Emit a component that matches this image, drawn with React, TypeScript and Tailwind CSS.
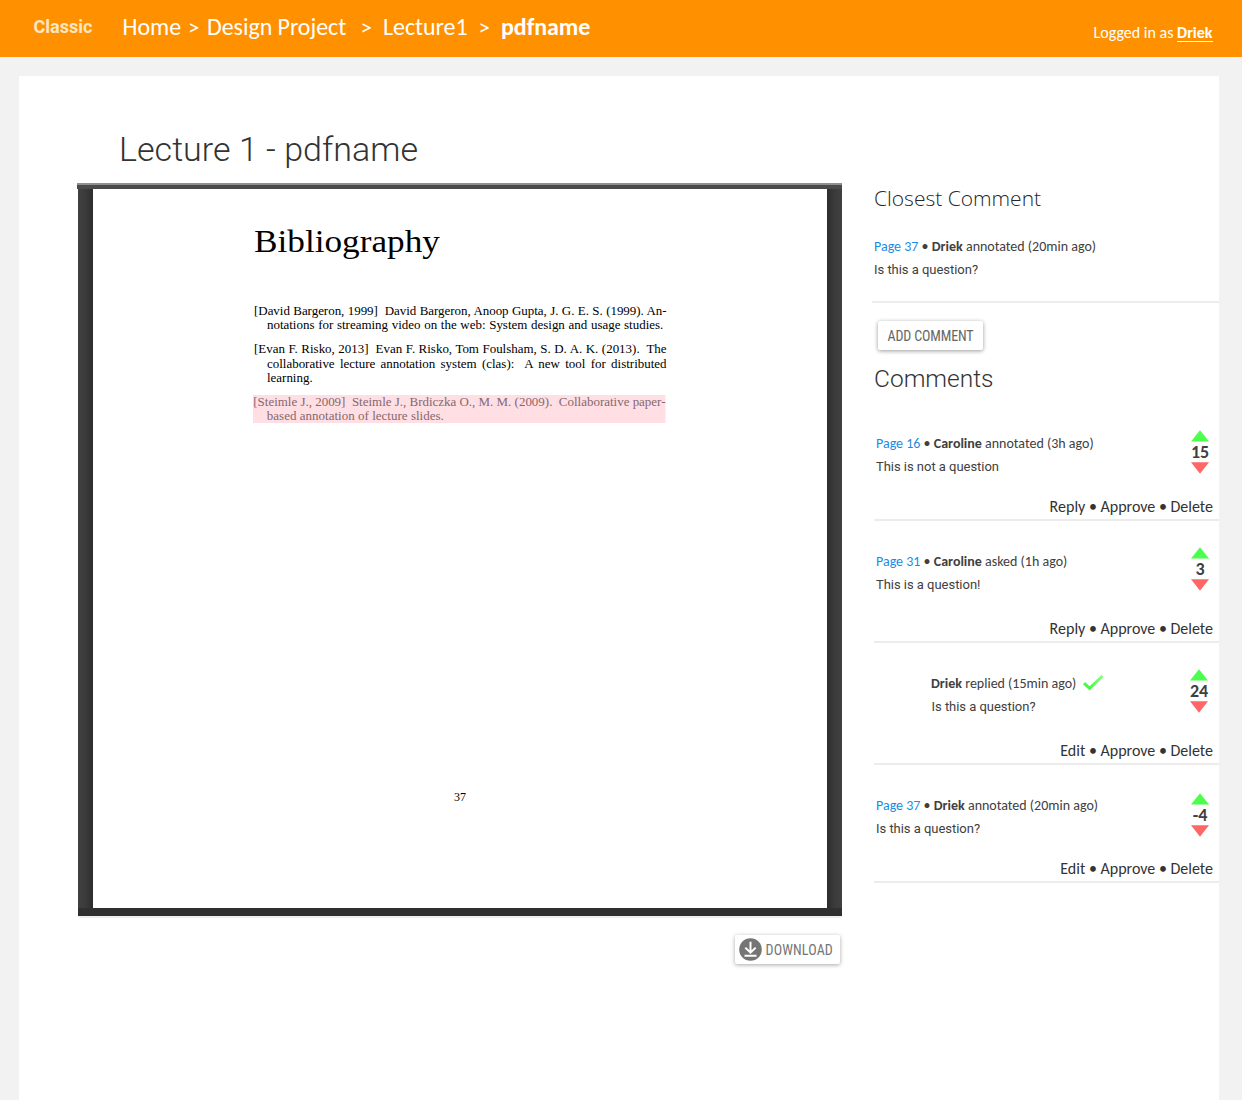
import React from "react";

type Entry = {
  page?: string;
  author: string;
  action: string;
  text: string;
  score: string;
  first: string;
  approved?: boolean;
  className: string;
  votes: string;
};

const entries: Entry[] = [
  { page: "Page 16", author: "Caroline", action: "annotated (3h ago)", text: "This is not a question", score: "15", first: "Reply", className: "h-[118px]", votes: "mt-[27px] mr-[10px]" },
  { page: "Page 31", author: "Caroline", action: "asked (1h ago)", text: "This is a question!", score: "3", first: "Reply", className: "h-[122px]", votes: "mt-[26px] mr-[10px]" },
  { author: "Driek", action: "replied (15min ago)", text: "Is this a question?", score: "24", first: "Edit", approved: true, className: "h-[122px]", votes: "mt-[26px] mr-[11px]" },
  { page: "Page 37", author: "Driek", action: "annotated (20min ago)", text: "Is this a question?", score: "-4", first: "Edit", className: "h-[118px]", votes: "mt-[28px] mr-[10px]" },
];

function Meta({ page, author, action, approved }: { page?: string; author: string; action: string; approved?: boolean }) {
  return (
    <div className="flex h-6 items-center whitespace-nowrap text-[14px] text-[#404040]">
      <span className="whitespace-pre">
        {page && (
          <>
            <a className="text-[#1a8ce3]">{page}</a>
            {" • "}
          </>
        )}
        <b>{author}</b> {action}
      </span>
      {approved && (
        <svg className="ml-[6px]" width="23" height="18" viewBox="0 0 23 18" fill="none">
          <defs>
            <linearGradient id="tick" x1="0" y1="1" x2="1" y2="0">
              <stop offset="0.2" stopColor="#46fb46" />
              <stop offset="1" stopColor="#8dff8d" />
            </linearGradient>
          </defs>
          <path d="M2 9.2 L7.6 14.4 L20.6 1.8" stroke="url(#tick)" strokeWidth="3" />
        </svg>
      )}
    </div>
  );
}

function Votes({ score, className }: { score: string; className: string }) {
  return (
    <div className={`flex w-[18px] shrink-0 flex-col items-center ${className}`}>
      <svg width="18" height="12" viewBox="0 0 18 12">
        <path d="M9 0.3 L18 11.5 H0 Z" fill="#4dff4d" />
      </svg>
      <span className="flex h-[20px] items-center text-[18px] leading-none font-bold text-[#404040]">{score}</span>
      <svg width="18" height="12" viewBox="0 0 18 12">
        <path d="M0 0.3 H18 L9 11.7 Z" fill="#ff6666" />
      </svg>
    </div>
  );
}

function Comment({ entry }: { entry: Entry }) {
  return (
    <article className={`flex flex-col border-b-2 border-[#ececec] ${entry.className}`}>
      <div className="flex h-[76px] justify-between">
        <div className={`pt-[28px] ${entry.page ? "pl-[2px]" : "pl-[57px]"}`}>
          <Meta page={entry.page} author={entry.author} action={entry.action} approved={entry.approved} />
          <p className={`h-[23px] font-[Roboto] text-[13px] leading-[23px] tracking-[-0.03px] text-[#404040] ${entry.page ? "" : "pl-[0.5px]"}`}>{entry.text}</p>
        </div>
        <Votes score={entry.score} className={entry.votes} />
      </div>
      <div className="mt-auto flex justify-end pr-[6px] pb-[2px] text-[16px] leading-5 whitespace-pre text-[#333]">
        {entry.first} • Approve • Delete
      </div>
    </article>
  );
}

function Bibliography() {
  return (
    <div className="w-[382px] origin-left scale-x-[1.08] text-[12px] leading-[14.4px] whitespace-nowrap text-black">
      <div className="mb-[9.5px]">
        <p className="tracking-[-0.02px] [text-align-last:justify]">[David Bargeron, 1999]&nbsp; David Bargeron, Anoop Gupta, J. G. E. S. (1999). An-</p>
        <p className="ml-3 w-[367px] [text-align-last:justify]">notations for streaming video on the web: System design and usage studies.</p>
      </div>
      <div className="mb-[10px]">
        <p className="[text-align-last:justify]">[Evan F. Risko, 2013]&nbsp; Evan F. Risko, Tom Foulsham, S. D. A. K. (2013).&nbsp; The</p>
        <p className="ml-3 [text-align-last:justify]">collaborative lecture annotation system (clas):&nbsp; A new tool for distributed</p>
        <p className="ml-3">learning.</p>
      </div>
      <div className="-ml-[0.7px] h-7 w-[381.5px] bg-[#ffdfe4] leading-[14px] text-[#85686e]">
        <p className="-mt-[0.6px] [text-align-last:justify]">[Steimle J., 2009]&nbsp; Steimle J., Brdiczka O., M. M. (2009).&nbsp; Collaborative paper-</p>
        <p className="ml-[12.5px] tracking-[0.03px]">based annotation of lecture slides.</p>
      </div>
    </div>
  );
}

export default function App() {
  return (
    <div className="flex h-[1100px] w-[1242px] flex-col overflow-hidden bg-[#f2f2f2] font-[Carlito,Calibri,'Open_Sans',sans-serif]">
      <header className="flex h-[57px] shrink-0 justify-between bg-[#ff9100] pr-[29.5px] pl-[33.5px] text-white">
        <div className="flex h-[54px] items-center">
          <span className="-mt-px w-[89px] font-[Roboto] text-[18px] font-bold tracking-[0.03px] text-[#ffe6c4]">Classic</span>
          <nav className="flex items-center text-[24px] leading-none tracking-[-0.05px] whitespace-nowrap">
            <a className="w-[65.5px]">Home</a>
            <span className="w-[19px] text-[23px]">&gt;</span>
            <a className="w-[153.5px]">Design Project</a>
            <span className="w-[22.5px] text-[23px]">&gt;</span>
            <a className="w-[95.5px]">Lecture1</a>
            <span className="w-[22.5px] text-[23px]">&gt;</span>
            <b>pdfname</b>
          </nav>
        </div>
        <div className="flex items-start pt-[23px] text-[16px] leading-5 whitespace-pre">
          Logged in as <b className="border-b border-white pt-px leading-[17px]">Driek</b>
        </div>
      </header>

      <main className="mt-[19px] mr-[23px] ml-[19px] flex grow bg-white">
        <section className="ml-[58px] w-[765px] shrink-0">
          <h1 className="ml-[42px] h-[107px] pt-[53px] font-[Roboto] text-[34px] leading-10 font-light tracking-[0.03px] text-[#333]">Lecture 1 - pdfname</h1>
          <div className="h-[6px] border-t-2 border-[#8f8f8f] bg-[#4a4a4a]" />
          <div className="ml-px flex h-[727px] border-b-8 border-[#303030]">
            <div className="w-[15px] bg-linear-to-r from-[#404040] via-[#3b3b3b] to-[#2c2c2c]" />
            <div className="flex w-[734px] flex-col bg-white pl-[161px] font-['Liberation_Serif']">
              <h2 className="h-[115px] w-[170px] origin-left scale-x-[1.101] pt-[32px] text-[32px] leading-10 text-black">Bibliography</h2>
              <Bibliography />
              <span className="mt-auto mb-[103px] ml-[200px] w-[12px] text-[12px] leading-4 text-black">37</span>
            </div>
            <div className="w-[15px] bg-linear-to-l from-[#404040] via-[#3b3b3b] to-[#2c2c2c]" />
          </div>
          <div className="ml-px h-[2px] bg-[#f0f0f0]" />
          <button className="mt-[17px] mr-[2px] ml-auto flex h-[29px] w-[105px] items-center rounded-[2px] bg-white pl-1 text-[#757575] shadow-[0_1px_4px_rgba(0,0,0,0.35)]">
            <svg width="23" height="23" viewBox="0 0 23 23" fill="none">
              <circle cx="11.5" cy="11.5" r="11.3" fill="#757575" />
              <path d="M11.5 3.8 V14.5 M6.3 9.6 L11.5 14.7 L16.7 9.6 M5.5 17.8 H17.5" stroke="#fff" strokeWidth="2" />
            </svg>
            <span className="ml-[3.5px] pt-[2px] font-[Roboto] text-[14px] tracking-[0.15px] [font-stretch:80%]">DOWNLOAD</span>
          </button>
        </section>

        <aside className="ml-[32px] flex grow flex-col">
          <section className="-ml-[2px] h-[227px] border-b-2 border-[#ececec] pl-[2px]">
            <h3 className="pt-[106px] font-['Open_Sans'] text-[21px] leading-8 font-[350] text-[#262626]">Closest Comment</h3>
            <div className="mt-[20px]">
              <Meta page="Page 37" author="Driek" action="annotated (20min ago)" />
              <p className="font-[Roboto] text-[13px] leading-[23px] tracking-[-0.03px] text-[#404040]">Is this a question?</p>
            </div>
          </section>
          <button className="mt-[18px] ml-[4px] h-[29px] w-[105px] shrink-0 rounded-[2px] bg-white pt-px font-[Roboto] text-[14px] tracking-[-0.14px] text-[#666] shadow-[0_1px_4px_rgba(0,0,0,0.4)] [font-stretch:80%]">ADD COMMENT</button>
          <h3 className="mt-[12px] h-[41px] font-[Roboto] text-[24.5px] leading-[34px] font-light text-[#333]">Comments</h3>
          {entries.map((entry) => (
            <Comment key={entry.score} entry={entry} />
          ))}
        </aside>
      </main>
    </div>
  );
}
